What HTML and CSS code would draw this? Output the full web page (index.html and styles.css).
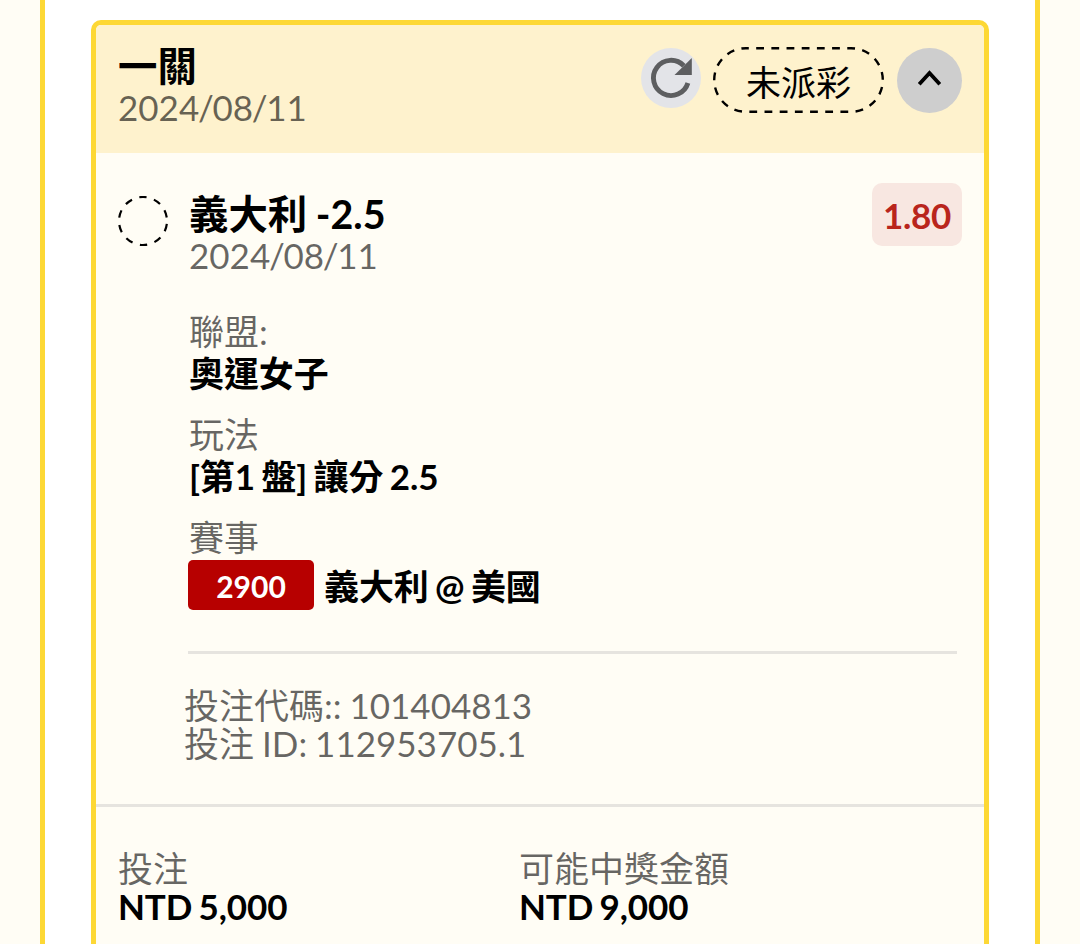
FILE: index.html
```html
<!DOCTYPE html>
<html lang="zh-Hant">
<head>
  <meta charset="UTF-8" />
  <meta name="viewport" content="width=device-width, initial-scale=1.0"/>
  <title>投注紀錄</title>
  <link rel="stylesheet" href="styles.css">
</head>
<body>

  <div class="page-frame">
    <div class="bet-card">
      <div class="card-header">
        <div class="header-info">
          <div class="title">一關</div>
          <div class="date">2024<span>/</span>08<span>/</span>11</div>
        </div>
        <div class="header-actions">
          <button class="refresh-btn" aria-label="refresh">
            <svg width="60" height="60" viewBox="0 0 60 60">
              <path d="M46.9 35A17.6 17.6 0 1 1 42.8 17.8" fill="none" stroke="#5d5e60" stroke-width="4.9"/>
              <path d="M50.8 10V27H33.5Z" fill="#5d5e60"/>
            </svg>
          </button>
          <div class="status">
            <svg class="status-outline" width="171" height="66" viewBox="0 0 171 66">
              <rect x="1.2" y="1.2" width="168.6" height="63.6" rx="31.8"/>
            </svg>
            <span>未派彩</span>
          </div>
          <button class="toggle-btn" aria-label="toggle">
            <svg width="65" height="65" viewBox="0 0 65 65">
              <path d="M22.2 36.2L32.5 25L42.8 36.2" fill="none" stroke="#000" stroke-width="3.8"/>
            </svg>
          </button>
        </div>
      </div>

      <div class="selection">
        <svg class="pending-icon" width="50" height="50" viewBox="0 0 50 50">
          <circle cx="25" cy="25" r="24"/>
        </svg>
        <div class="selection-info">
          <div class="selection-top">
            <div>
              <div class="title">義大利 -2.5</div>
              <div class="date">2024<span>/</span>08<span>/</span>11</div>
            </div>
            <div class="odds">1.80</div>
          </div>
          <div class="details">
            <div class="detail">
              <div class="label">聯盟:</div>
              <div class="value">奧運女子</div>
            </div>
            <div class="detail">
              <div class="label">玩法</div>
              <div class="value">[第1 盤] 讓分 2.5</div>
            </div>
            <div class="detail">
              <div class="label">賽事</div>
              <div class="match">
                <span class="match-code">2900</span>
                <span class="value">義大利 @ 美國</span>
              </div>
            </div>
          </div>
          <div class="bet-ids">
            <div>投注代碼:: 101404813</div>
            <div>投注 ID: 112953705.1</div>
          </div>
        </div>
      </div>

      <div class="card-footer">
        <div>
          <div class="label">投注</div>
          <div class="amount">NTD 5,000</div>
        </div>
        <div>
          <div class="label">可能中獎金額</div>
          <div class="amount">NTD 9,000</div>
        </div>
      </div>
    </div>
  </div>

</body>
</html>
```
FILE: styles.css
```css
* {
  box-sizing: border-box;
}

body {
  margin: 0;
  padding: 0 40px;
  height: 944px;
  overflow: hidden;
  background: #fffdf5;
  color: #000;
  font-family: Lato, 'Noto Sans CJK TC', sans-serif;
  font-size: 35px;
  line-height: 38px;
}

.page-frame {
  height: 944px;
  padding: 20px 46px 0;
  background: #fff;
  border: solid #fdd835;
  border-width: 0 5px;
}

.bet-card {
  height: 944px;
  background: #fffdf5;
  border: 5px solid #fdd835;
  border-radius: 10px;
  overflow: hidden;
}

.card-header {
  display: flex;
  justify-content: space-between;
  height: 128px;
  padding: 20px 22px 0 22px;
  background: #fef2cd;
}

.title {
  font-size: 39.4px;
  font-weight: 700;
  line-height: 42px;
  word-spacing: -1px;
}

.date {
  color: rgba(0, 0, 0, 0.6);
}

.date span {
  margin: 0 -1.3px;
}

.header-info .date {
  margin-top: 1px;
}

.header-actions {
  display: flex;
  align-items: flex-start;
  padding-top: 2px;
}

.refresh-btn, .toggle-btn {
  display: flex;
  margin-top: 1px;
  padding: 0;
  border: none;
  border-radius: 50%;
  cursor: pointer;
}

.refresh-btn {
  background: #e3e4e8;
}

.toggle-btn {
  background: #cecece;
}

.status {
  position: relative;
  width: 171px;
  height: 66px;
  margin: 0 13px 0 12px;
  line-height: 70px;
  text-align: center;
}

.status-outline {
  position: absolute;
  top: 0;
  left: 0;
  fill: none;
  stroke: #000;
  stroke-width: 2.4;
  stroke-dasharray: 7.8 7.38;
  stroke-dashoffset: 5;
}

.selection {
  display: flex;
  gap: 20px;
  height: 654px;
  padding: 30px 22px 0 22px;
  border-bottom: 3px solid #e6e4df;
}

.pending-icon {
  flex: none;
  margin-top: 13px;
  fill: none;
  stroke: #000;
  stroke-width: 2.2;
  stroke-dasharray: 7.5 7.58;
  stroke-dashoffset: -3;
}

.selection-info {
  flex: 1;
}

.selection-top {
  display: flex;
  justify-content: space-between;
  align-items: flex-start;
}

.selection-top .title {
  margin-top: 10px;
  padding-left: 1px;
}

.selection-top .date {
  margin-top: 1px;
  padding-left: 1px;
}

.odds {
  width: 90px;
  height: 63px;
  border-radius: 10px;
  background: #f8e7e1;
  color: #b9251c;
  font-weight: 700;
  line-height: 65px;
  letter-spacing: -0.3px;
  text-align: center;
}

.details {
  display: flex;
  flex-direction: column;
  gap: 20px;
  height: 380px;
  margin-right: 5px;
  padding-top: 38px;
  border-bottom: 3px solid #e6e4df;
}

.label {
  color: rgba(0, 0, 0, 0.6);
}

.detail .label {
  padding-left: 1px;
}

.value {
  padding: 2px 0 0 1px;
  font-weight: 700;
  line-height: 43px;
  letter-spacing: -0.1px;
  word-spacing: -2px;
}

.match {
  display: flex;
  align-items: center;
  gap: 10px;
  margin-top: 4px;
}

.match .value {
  padding: 2px 0 0;
}

.match-code {
  width: 126px;
  height: 50px;
  border-radius: 5px;
  background: #b70000;
  color: #fff;
  font-size: 30px;
  font-weight: 700;
  line-height: 52px;
  text-align: center;
}

.bet-ids {
  margin: 32px 0 0 -4px;
  color: rgba(0, 0, 0, 0.6);
  word-spacing: -1px;
}

.card-footer {
  display: grid;
  grid-template-columns: 401px 1fr;
  padding: 42px 22px 0;
}

.amount {
  font-weight: 700;
  letter-spacing: -0.1px;
  word-spacing: -2.2px;
}
```
